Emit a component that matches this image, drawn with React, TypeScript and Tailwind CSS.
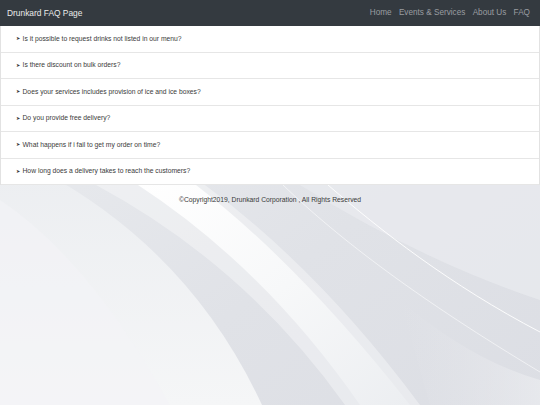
const navLinks = ["Home", "Events & Services", "About Us", "FAQ"];

const questions = [
  "Is it possible to request drinks not listed in our menu?",
  "Is there discount on bulk orders?",
  "Does your services includes provision of ice and ice boxes?",
  "Do you provide free delivery?",
  "What happens if i fail to get my order on time?",
  "How long does a delivery takes to reach the customers?",
];

// silvery swoosh wallpaper behind the page
function Backdrop() {
  return (
    <svg
      className="absolute inset-0 w-full h-full"
      viewBox="0 0 540 405"
      preserveAspectRatio="none"
    >
      <defs>
        <linearGradient id="base" x1="0" y1="0" x2="1" y2="1">
          <stop offset="0" stopColor="#eceef1" />
          <stop offset="0.6" stopColor="#e0e2e7" />
          <stop offset="1" stopColor="#dcdee4" />
        </linearGradient>
        <linearGradient id="leftLight" x1="0" y1="0" x2="0" y2="1">
          <stop offset="0" stopColor="#eceef1" />
          <stop offset="1" stopColor="#f5f6f7" />
        </linearGradient>
        <linearGradient id="band" x1="0" y1="0" x2="1" y2="1">
          <stop offset="0" stopColor="#ffffff" />
          <stop offset="0.5" stopColor="#f7f8f9" />
          <stop offset="1" stopColor="#eceef1" />
        </linearGradient>
        <linearGradient id="rightLight" x1="0" y1="0" x2="1" y2="0">
          <stop offset="0" stopColor="#e7e8ec" stopOpacity="0" />
          <stop offset="1" stopColor="#eeeff2" />
        </linearGradient>
      </defs>
      <rect width="540" height="405" fill="url(#base)" />
      <path d="M0 170 L40 170 Q190 250 262 405 L0 405 Z" fill="url(#leftLight)" />
      <path d="M0 200 Q90 260 170 405 L0 405 Z" fill="#f3f4f6" opacity="0.6" />
      <path d="M96 185 Q245 265 345 405 L420 405 Q320 270 205 185 Z" fill="#ffffff" opacity="0.35" />
      <path d="M138 185 Q265 268 360 405 L410 405 Q300 265 196 185 Z" fill="url(#band)" />
      <path d="M300 185 Q420 260 540 300 L540 185 Z" fill="#eaebef" opacity="0.7" />
      <path d="M283 185 C340 240 420 300 540 372" fill="none" stroke="#ffffff" strokeWidth="0.8" opacity="0.7" />
      <path d="M328 185 C380 230 450 285 540 332" fill="none" stroke="#ffffff" strokeWidth="1" opacity="0.9" />
      <path d="M400 300 Q470 360 540 380 L540 405 L430 405 Z" fill="url(#rightLight)" opacity="0.6" />
    </svg>
  );
}

export default function App() {
  return (
    <div
      className="relative w-[540px] h-[405px] overflow-hidden text-[#333]"
      style={{ fontFamily: '"Liberation Sans", Arial, sans-serif' }}
    >
      <Backdrop />

      <div className="relative">
        {/* top bar */}
        <nav className="h-[26px] bg-[#343a40] flex items-center justify-between pl-[7px] pr-[10px]">
          <span className="text-[8.4px] text-[#ebebeb]">Drunkard FAQ Page</span>
          <div className="flex gap-[7.3px] text-[8.2px] text-[#9a9da0]">
            {navLinks.map((link) => (
              <span key={link}>{link}</span>
            ))}
          </div>
        </nav>

        {/* faq list */}
        <div className="bg-white border-x border-[#e2e2e2]">
          {questions.map((q) => (
            <div
              key={q}
              className="h-[26.5px] flex items-center pl-[15px] border-b border-[#e6e6e6] text-[6.75px] text-[#3a3a3a]"
            >
              <span className="text-[4.6px] mr-[2.5px] translate-y-[0.8px]">➤</span>
              {q}
            </div>
          ))}
        </div>

        <p className="mt-[10.5px] text-center text-[6.75px] leading-[8px] text-[#3a3a3a]">
          ©Copyright2019, Drunkard Corporation , All Rights Reserved
        </p>
      </div>
    </div>
  );
}
